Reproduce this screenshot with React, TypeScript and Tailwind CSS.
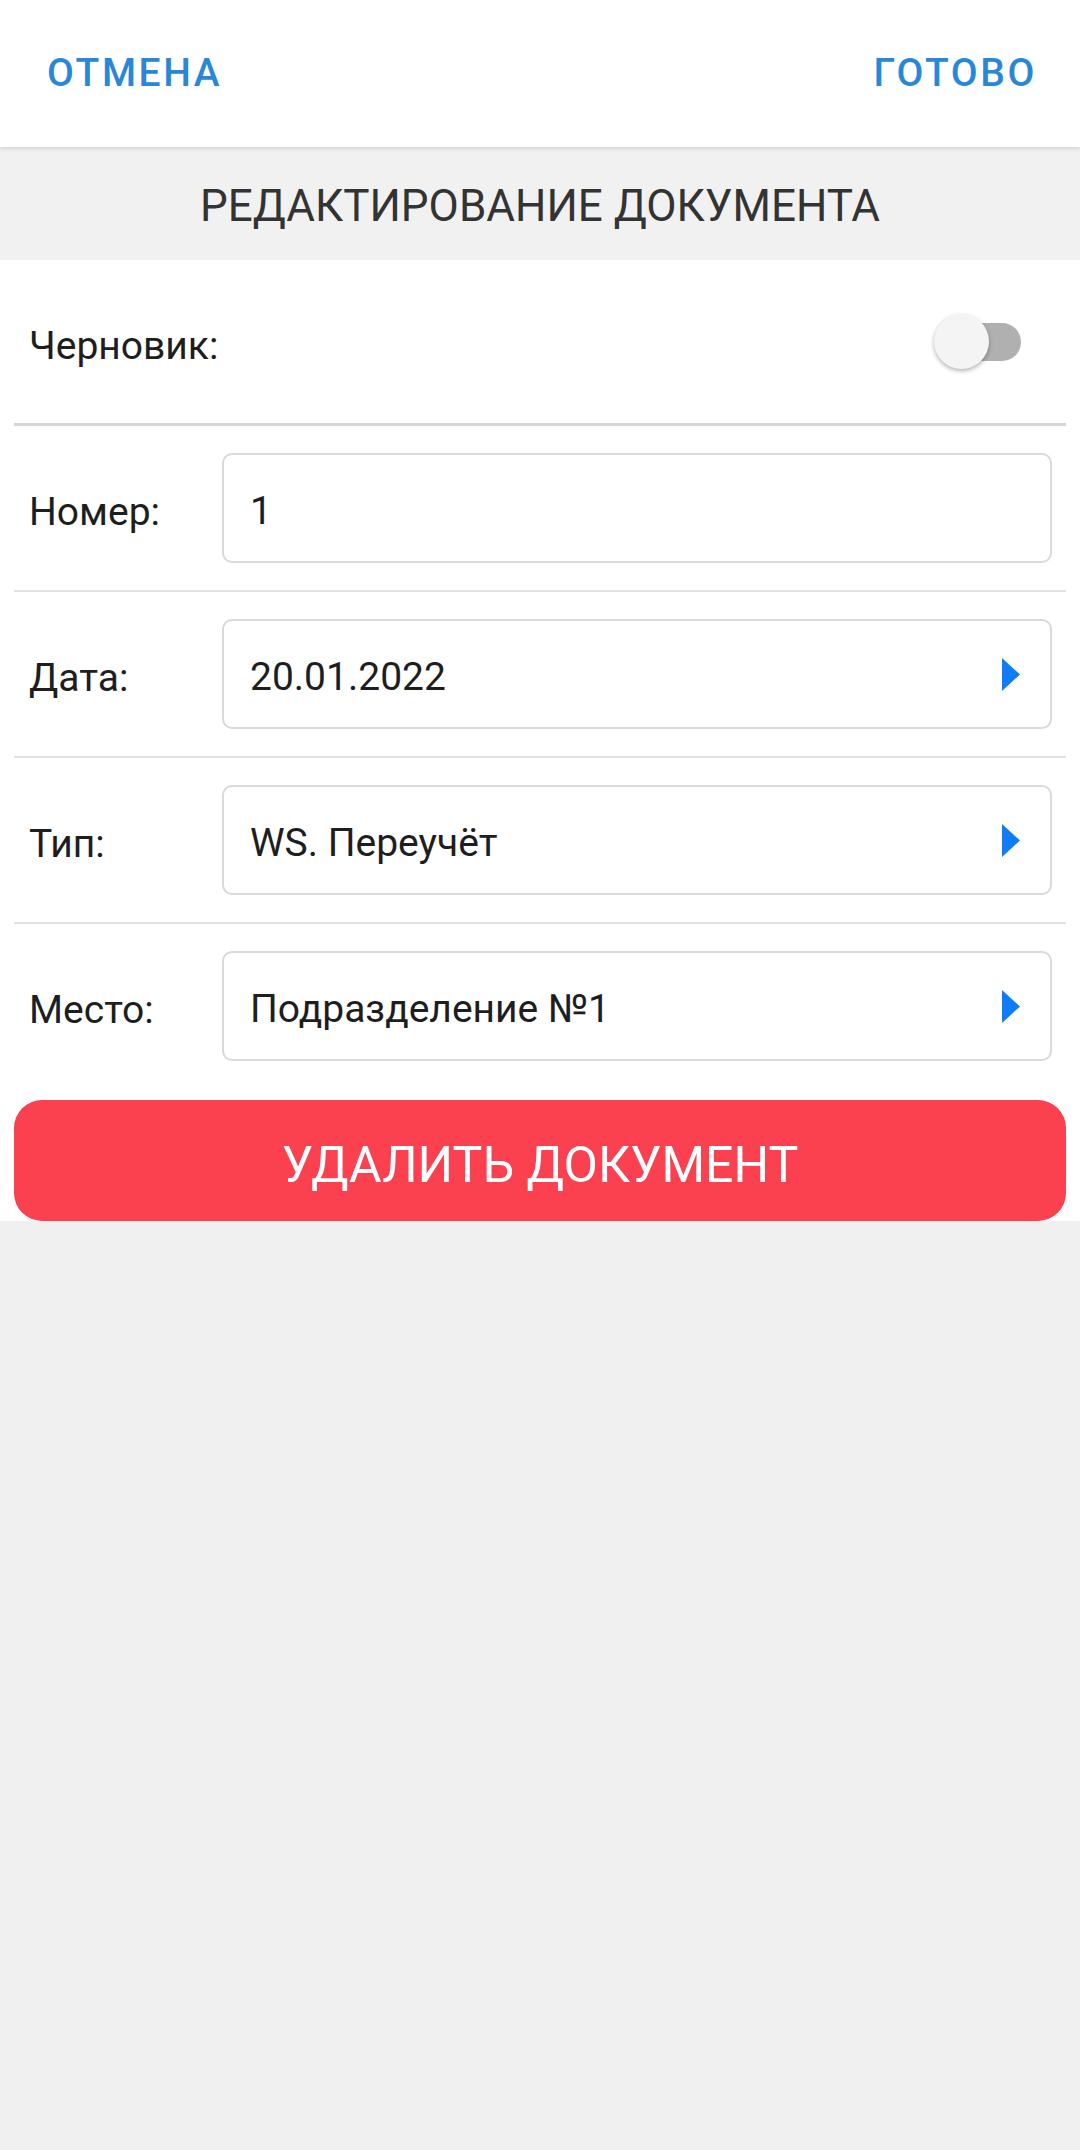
import React from "react";

function Arrow() {
  return (
    <svg width="18" height="33" viewBox="0 0 18 33" className="shrink-0">
      <polygon points="0,0 18,16.5 0,33" fill="#0f7bf5" />
    </svg>
  );
}

function FieldRow({
  label,
  value,
  arrow,
  last,
}: {
  label: string;
  value: string;
  arrow?: boolean;
  last?: boolean;
}) {
  return (
    <div
      className={
        last
          ? "flex items-center py-[27px]"
          : "flex items-center h-[166px] border-b-2 border-[#e2e2e2]"
      }
    >
      <div className="w-[208px] pl-[15px] pt-[8px] text-[39px] text-[#1e1e1e] leading-none">{label}</div>
      <div className="flex-1 mr-[14px] h-[110px] rounded-[10px] border-2 border-[#d9d9d9] flex items-center justify-between pl-[26px] pr-[30px]">
        <span className="pt-[7px] text-[39px] text-[#1e1e1e] leading-none">{value}</span>
        {arrow ? <Arrow /> : null}
      </div>
    </div>
  );
}

export default function App() {
  return (
    <div className="min-h-[2150px] w-full bg-[#f0f0f0] font-['Roboto',sans-serif]">
      <div className="relative z-10 h-[147px] bg-white flex items-center justify-between pl-[47px] pr-[43px] shadow-[0_2px_4px_rgba(0,0,0,0.12)]">
        <span className="text-[39px] font-medium tracking-[2.6px] text-[#2a87d8] leading-none">ОТМЕНА</span>
        <span className="text-[39px] font-medium tracking-[2.6px] text-[#2a87d8] leading-none">ГОТОВО</span>
      </div>
      <div className="h-[113px] bg-[#f1f1f1] flex items-center justify-center pt-[4px]">
        <span className="text-[44px] text-[#333333] leading-none">РЕДАКТИРОВАНИЕ ДОКУМЕНТА</span>
      </div>
      <div className="bg-white px-[14px]">
        <div className="flex items-center justify-between h-[166px] border-b-[3px] border-[#d6d6d6]">
          <span className="pl-[15px] pt-[9px] text-[39px] text-[#1e1e1e] leading-none">Черновик:</span>
          <div className="relative mr-[45px] w-[87px] h-[55px] flex items-center">
            <div className="absolute right-0 w-[76px] h-[38px] rounded-full bg-[#b0b0b0]" />
            <div className="absolute left-0 w-[55px] h-[55px] rounded-full bg-[#f4f4f4] shadow-[0_2px_4px_rgba(0,0,0,0.3)]" />
          </div>
        </div>
        <FieldRow label="Номер:" value="1" />
        <FieldRow label="Дата:" value="20.01.2022" arrow />
        <FieldRow label="Тип:" value="WS. Переучёт" arrow />
        <FieldRow label="Место:" value="Подразделение №1" arrow last />
        <div className="mt-[12px] h-[121px] rounded-[28px] bg-[#fb4050] flex items-center justify-center">
          <span className="pt-[8px] text-[50px] text-white leading-none">УДАЛИТЬ ДОКУМЕНТ</span>
        </div>
      </div>
    </div>
  );
}
